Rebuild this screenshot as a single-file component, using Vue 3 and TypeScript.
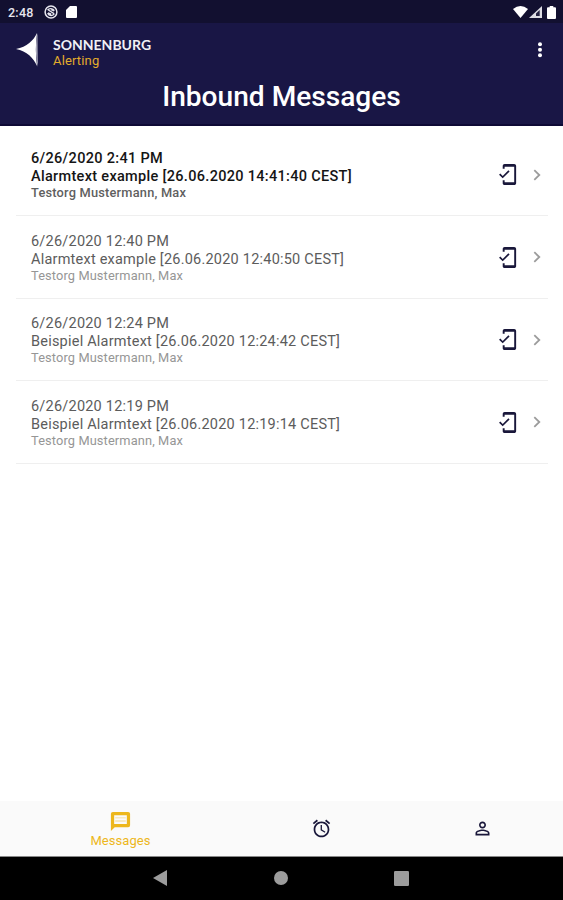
<script setup lang="ts">
interface Message {
  id: number
  date: string
  text: string
  sender: string
  unread: boolean
}

const messages: Message[] = [
  { id: 1, date: '6/26/2020 2:41 PM', text: 'Alarmtext example [26.06.2020 14:41:40 CEST]', sender: 'Testorg Mustermann, Max', unread: true },
  { id: 2, date: '6/26/2020 12:40 PM', text: 'Alarmtext example [26.06.2020 12:40:50 CEST]', sender: 'Testorg Mustermann, Max', unread: false },
  { id: 3, date: '6/26/2020 12:24 PM', text: 'Beispiel Alarmtext [26.06.2020 12:24:42 CEST]', sender: 'Testorg Mustermann, Max', unread: false },
  { id: 4, date: '6/26/2020 12:19 PM', text: 'Beispiel Alarmtext [26.06.2020 12:19:14 CEST]', sender: 'Testorg Mustermann, Max', unread: false },
]
</script>

<template>
  <div class="screen">
    <div class="status">
      <span class="clock">2:48</span>
      <svg class="sync" viewBox="0 0 14 14">
        <circle cx="7" cy="7" r="5.9" fill="none" stroke="#e6e6ee" stroke-width="1.5" />
        <path d="M3.5 5.2C5 3 9 3 10.3 5.6M3.6 8.1c1.6 3 5.2 3.2 6.8.6M4.4 5l5.6 3.6M7.2 4.6l3 1.4M4 7.8l3.2 1.4" fill="none" stroke="#e6e6ee" stroke-width="1.3" />
      </svg>
      <svg class="card" viewBox="0 0 11 12"><path d="M4 0h6q1 0 1 1v10q0 1-1 1H1q-1 0-1-1V4z" fill="#fff" /></svg>
      <span class="grow"></span>
      <svg class="wifi" viewBox="0 0 15 12"><path d="M0 3Q7.5-3 15 3L7.5 12z" fill="#fff" /></svg>
      <svg class="signal" viewBox="0 0 13 12">
        <path d="M0 12L13 0v12z" fill="#dddde4" />
        <path d="M7 10V7.4L10.7 4V10z" fill="#22203f" />
      </svg>
      <svg class="battery" viewBox="0 0 9 13"><path d="M2.7 0h3.6v1.3H8q1 0 1 1V12q0 1-1 1H1q-1 0-1-1V2.300q0-1 1-1h1.700z" fill="#fff" /></svg>
    </div>

    <header class="header">
      <div class="brand-row">
        <svg class="logo" viewBox="0 0 24 36">
          <path d="M21 1C17.500 8.500 11 15 0 17 11 19 17.500 26 21 34 19.500 23 19.500 12 21 1z" fill="#fff" />
          <path d="M21.500 1C19.300 12 19.300 24 22 35 21.600 24 21.600 12 21.500 1z" fill="#a9a8bb" />
        </svg>
        <div class="brand">
          <span class="name">SONNENBURG</span>
          <span class="product">Alerting</span>
        </div>
        <svg class="more" viewBox="0 0 6 18"><circle cx="3" cy="3.200" r="2" /><circle cx="3" cy="8.700" r="2" /><circle cx="3" cy="14.200" r="2" /></svg>
      </div>
      <h1>Inbound Messages</h1>
    </header>

    <main class="list">
      <article v-for="m in messages" :key="m.id" class="item" :class="{ unread: m.unread }">
        <div class="body">
          <div class="date">{{ m.date }}</div>
          <div class="text">{{ m.text }}</div>
          <div class="sender">{{ m.sender }}</div>
        </div>
        <svg class="phone" viewBox="0 0 24 24"><path d="M19 1H9c-1.100 0-2 .9-2 2v3h2V4h10v16H9v-2H7v3c0 1.100.9 2 2 2h10c1.100 0 2-.9 2-2V3c0-1.100-.9-2-2-2zM7.010 13.470l-2.550-2.550-1.270 1.270L7 16l7.190-7.190-1.270-1.270z" /></svg>
        <svg class="chevron" viewBox="0 0 8 12"><path d="M1.300 1.200L6.300 6l-5 4.800" /></svg>
      </article>
    </main>

    <nav class="tabs">
      <div class="tab active">
        <svg viewBox="0 0 24 24">
          <path d="M4 2h16q2 0 2 2v12q0 2-2 2H6l-4 4V4q0-2 2-2zM5.400 5.600v9h13.200v-9z" fill-rule="evenodd" />
          <path d="M6.500 7.700h11v1h-11zM6.500 11h11v1h-11z" opacity=".5" />
        </svg>
        <span>Messages</span>
      </div>
      <div class="tab">
        <svg viewBox="0 0 24 24"><path d="M12.500 8H11v6l4.750 2.850.75-1.230-4-2.370zM17.337 1.810l4.607 3.845-1.280 1.535-4.610-3.843zm-10.674 0l1.282 1.536L3.337 7.190l-1.280-1.536zM12 4c-4.970 0-9 4.030-9 9s4.030 9 9 9 9-4.030 9-9-4.030-9-9-9zm0 16c-3.860 0-7-3.140-7-7s3.140-7 7-7 7 3.140 7 7-3.140 7-7 7z" /></svg>
      </div>
      <div class="tab">
        <svg viewBox="0 0 24 24"><path d="M12 5.900c1.160 0 2.100.94 2.100 2.100s-.94 2.100-2.100 2.100S9.900 9.160 9.900 8s.94-2.100 2.100-2.100m0 9c2.970 0 6.100 1.460 6.100 2.100v1.100H5.900V17c0-.64 3.130-2.100 6.100-2.100M12 4C9.790 4 8 5.790 8 8s1.790 4 4 4 4-1.790 4-4-1.790-4-4-4zm0 9c-2.670 0-8 1.340-8 4v3h16v-3c0-2.660-5.330-4-8-4z" /></svg>
      </div>
    </nav>

    <div class="sysnav">
      <svg class="back" viewBox="0 0 14 16"><path d="M14 0v16L0 8z" /></svg>
      <svg class="home" viewBox="0 0 14 14"><circle cx="7" cy="7" r="7" /></svg>
      <svg class="recent" viewBox="0 0 15 15"><rect width="15" height="15" rx="1.300" /></svg>
    </div>
  </div>
</template>

<style>
body {
  margin: 0;
}
</style>

<style scoped>
.screen {
  display: flex;
  flex-direction: column;
  width: 563px;
  height: 900px;
  overflow: hidden;
  background: #fff;
  font-family: Roboto, "Liberation Sans", sans-serif;
}
svg {
  display: block;
  flex: none;
}
.status {
  display: flex;
  align-items: center;
  box-sizing: border-box;
  height: 23px;
  padding: 1px 7px 0 8px;
  background: #121030;
  color: #e6e6ee;
}
.clock {
  width: 36px;
  font-size: 12.5px;
  font-weight: 500;
  letter-spacing: 0.25px;
}
.sync {
  width: 14px;
  height: 14px;
}
.card {
  width: 11px;
  height: 12px;
  margin-left: 8px;
}
.grow {
  flex: 1;
}
.wifi {
  width: 15px;
  height: 12px;
}
.signal {
  width: 13px;
  height: 12px;
  margin-left: 1px;
}
.battery {
  width: 9px;
  height: 13px;
  margin-left: 5px;
}
.header {
  box-sizing: border-box;
  height: 103px;
  background: #191645;
  border-bottom: 2px solid #0e0a35;
}
.brand-row {
  display: flex;
  height: 53px;
  padding: 0 20px 0 16px;
  align-items: center;
}
.logo {
  width: 24px;
  height: 36px;
}
.brand {
  display: flex;
  flex: 1;
  flex-direction: column;
  padding: 7px 0 0 13px;
}
.name {
  color: #f0f0f5;
  font-family: Lato, sans-serif;
  font-size: 14px;
  font-weight: 700;
  line-height: 16px;
}
.product {
  color: #e3ac2c;
  font-size: 13px;
  letter-spacing: 0.15px;
  line-height: 16px;
}
.more {
  width: 6px;
  height: 18px;
  fill: #fff;
}
h1 {
  margin: 0;
  color: #fff;
  font-size: 28.1px;
  font-weight: 500;
  line-height: 42px;
  text-align: center;
}
.list {
  flex: 1;
  padding: 7.5px 15px 0 16px;
}
.item {
  display: flex;
  align-items: center;
  box-sizing: border-box;
  height: 82.5px;
  padding: 1px 7px 0 15px;
  border-bottom: 1px solid #efefef;
}
.body {
  flex: 1;
  padding-top: 2px;
  letter-spacing: 0.22px;
}
.date {
  color: #5c5c5c;
  font-size: 14.5px;
  line-height: 18px;
}
.text {
  color: #5c5c5c;
  font-size: 14.5px;
  line-height: 18px;
}
.sender {
  margin-bottom: 2px;
  color: #969696;
  font-size: 12.8px;
  letter-spacing: 0.13px;
  line-height: 13.5px;
}
.unread .date,
.unread .text {
  color: #151515;
  font-weight: 500;
  letter-spacing: 0.31px;
}
.unread .sender {
  color: #5f5f5f;
  font-weight: 500;
  letter-spacing: 0.21px;
}
.phone {
  width: 23px;
  height: 23px;
  fill: #19173a;
}
.chevron {
  width: 8px;
  height: 12px;
  margin-left: 14px;
  fill: none;
  stroke: #9c9c9c;
  stroke-width: 1.8;
}
.tabs {
  display: flex;
  box-sizing: border-box;
  height: 56px;
  background: #fafafa;
  border-bottom: 1px solid #888;
}
.tab {
  display: flex;
  flex: 1 1 161px;
  flex-direction: column;
  align-items: center;
  justify-content: center;
  color: #19173a;
}
.tab.active {
  flex: 0 0 241px;
  color: #edb71c;
}
.tab svg {
  width: 21px;
  height: 21px;
  fill: currentColor;
}
.tab.active svg {
  width: 23px;
  height: 23px;
}
.tab span {
  font-size: 13px;
  line-height: 15px;
  letter-spacing: 0.05px;
}
.sysnav {
  display: flex;
  align-items: center;
  box-sizing: border-box;
  height: 43px;
  padding: 0 0 1px 153px;
  background: #000;
  fill: #9c9c9c;
}
.back {
  width: 14px;
  height: 16px;
}
.home {
  width: 14px;
  height: 14px;
  margin: 0 106px 0 107px;
}
.recent {
  width: 15px;
  height: 15px;
}
</style>
